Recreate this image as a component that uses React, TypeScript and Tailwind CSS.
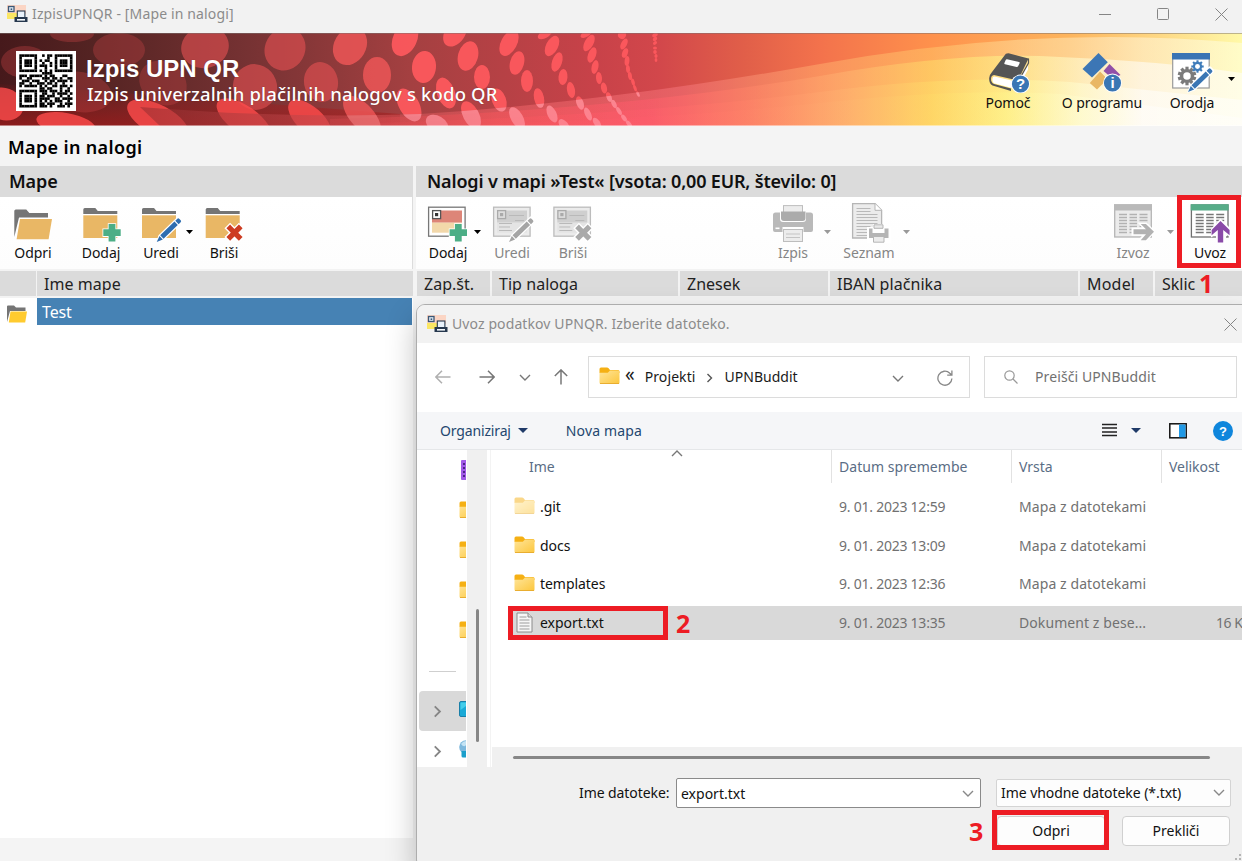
import type { ReactNode } from "react";

const QR_ROWS = [
  "111111100101101111111",
  "100000100001001000001",
  "101110101011001011101",
  "101110100100101011101",
  "101110101110101011101",
  "100000100010001000001",
  "111111101010101111111",
  "000000000111100000000",
  "111011111010110001100",
  "100110000111011010011",
  "011101110010110111101",
  "110010011101101001000",
  "101111101010011011101",
  "000000001101100010010",
  "111111101110111010110",
  "100000100110010111101",
  "101110101101110010010",
  "101110101111001101111",
  "101110101010101110010",
  "100000101101110010111",
  "111111101110100111010",
];

function QrCode() {
  return (
    <svg className="block h-[60px] w-[60px] shrink-0" viewBox="0 0 60 60">
      <rect width="60" height="60" fill="#fff" />
      {QR_ROWS.map((row, y) =>
        row.split("").map((c, x) =>
          c === "1" ? (
            <rect key={`${x}-${y}`} x={3.3 + x * 2.53} y={3.3 + y * 2.53} width="2.6" height="2.6" fill="#000" />
          ) : null,
        ),
      )}
    </svg>
  );
}

/* cx, cy, rx, ry, rotation */
const FAINT_DOTS = [
  [72, 34, 22, 8, 0],
  [25, 62, 24, 16, 0],
  [119, 50, 26, 17, 0],
  [80, 92, 32, 20, 10],
  [163, 83, 21, 25, -55],
];
const MID_DOTS = [
  [205, 47, 24, 21, -15],
  [255, 87, 22, 23, -20],
  [285, 49, 20, 22, 30],
  [321, 82, 17, 20, -10],
];
const WARM_DOTS = [
  [350, 46, 16, 20, 30],
  [377, 75, 14, 18, 0],
  [362, 116, 12, 25, -42],
];
const DOTS = [
  [405, 39, 12, 18, 25],
  [424, 67, 12, 16, 5],
  [409, 105, 10, 18, -30],
  [455, 33, 10, 15, 35],
  [468, 56, 10, 15, 15],
  [482, 77, 8, 12, 0],
  [446, 93, 9, 16, -20],
  [499, 100, 7, 12, -20],
  [471, 115, 8, 15, -28],
  [437, 124, 8, 12, -60],
  [517, 118, 6, 12, -30],
  [509, 43, 8, 14, 28],
  [517, 63, 7, 12, 15],
  [527, 81, 6, 11, 0],
  [539, 98, 5, 10, -12],
  [552, 114, 4.5, 9, -25],
  [564, 125, 4, 7, -40],
  [545, 34, 8, 4, -30],
  [552, 46, 6, 11, 27],
  [557, 62, 5, 10, 18],
  [563, 77, 4.5, 8, 5],
  [571, 90, 4, 8, -10],
  [580, 103, 3.5, 7, -20],
  [588, 114, 3, 7, -25],
  [597, 123, 3, 6, -35],
  [586, 34, 6, 3, -30],
  [589, 43, 4.5, 9, 28],
  [592, 55, 4, 8, 20],
  [595, 67, 3.4, 7, 12],
  [599, 78, 3, 6, -5],
  [604, 88, 3, 5.5, -12],
  [609, 97, 2.5, 5, -20],
  [614, 104, 2.2, 4.5, -25],
  [619, 111, 2, 4.5, -30],
  [624, 118, 2, 4, -35],
  [629, 124, 2, 4, -38],
  [622, 35, 4, 4, 30],
  [624, 44, 3, 6, 27],
  [625, 53, 2.8, 5, 20],
  [627, 61, 2.4, 5, 5],
  [628, 69, 2, 4, -5],
  [630, 76, 2, 4, -10],
  [633, 82, 1.7, 3.5, -15],
  [635, 88, 1.5, 3.5, -20],
  [638, 94, 1.4, 3, -25],
  [655, 35, 3, 2, -35],
  [655, 39, 2.4, 1.8, -35],
  [655, 43, 2.2, 1.6, -35],
  [655, 48, 2, 1.6, 0],
  [655, 52, 1.8, 2, 0],
  [656, 56, 1.6, 2, 0],
  [656, 60, 1.4, 2, 0],
];
const GLOW_DOTS = [
  [4, 104, 20, 16, 20],
  [66, 124, 30, 11, 10],
  [158, 120, 15, 34, -62],
  [244, 120, 14, 32, -55],
  [310, 120, 13, 27, -48],
];

function Dots({ list, fill, opacity }: { list: number[][]; fill: string; opacity: number }) {
  return (
    <g fill={fill} opacity={opacity}>
      {list.map(([x, y, rx, ry, r], i) => (
        <ellipse key={i} cx={x} cy={y} rx={rx} ry={ry} transform={`rotate(${r} ${x} ${y})`} />
      ))}
    </g>
  );
}

function BannerArt() {
  return (
    <svg className="absolute inset-0 h-full w-full" viewBox="0 33 1242 93" preserveAspectRatio="none">
      <defs>
        <linearGradient id="base" x1="0" x2="1242" y1="0" y2="0" gradientUnits="userSpaceOnUse">
          <stop offset="0" stopColor="#46191b" />
          <stop offset=".08" stopColor="#552423" />
          <stop offset=".2" stopColor="#763233" />
          <stop offset=".33" stopColor="#a44041" />
          <stop offset=".48" stopColor="#c84249" />
          <stop offset=".53" stopColor="#d2474b" />
          <stop offset=".6" stopColor="#e15f49" />
          <stop offset=".66" stopColor="#f3724c" />
          <stop offset=".75" stopColor="#fe914c" />
          <stop offset=".86" stopColor="#fdb45c" />
          <stop offset="1" stopColor="#fff9a8" />
        </linearGradient>
        <linearGradient id="outer" x1="0" x2="1242" y1="0" y2="0" gradientUnits="userSpaceOnUse">
          <stop offset=".1" stopColor="#8f2b2d" />
          <stop offset=".4" stopColor="#ee6267" />
          <stop offset=".55" stopColor="#f5747a" />
          <stop offset=".66" stopColor="#ffab6c" />
          <stop offset=".75" stopColor="#ffc468" />
          <stop offset=".83" stopColor="#ffe0a4" />
          <stop offset=".92" stopColor="#fff6dc" />
          <stop offset="1" stopColor="#ffffe2" />
        </linearGradient>
        <linearGradient id="sweep" x1="0" x2="1242" y1="0" y2="0" gradientUnits="userSpaceOnUse">
          <stop offset="0" stopColor="#7c1f20" />
          <stop offset=".15" stopColor="#a23335" />
          <stop offset=".4" stopColor="#f5565c" />
          <stop offset=".52" stopColor="#ff5c6c" />
          <stop offset=".6" stopColor="#ff8268" />
          <stop offset=".68" stopColor="#ffb370" />
          <stop offset=".75" stopColor="#ffdc68" />
          <stop offset=".81" stopColor="#fff68c" />
          <stop offset=".87" stopColor="#ffffd6" />
          <stop offset=".92" stopColor="#ffffff" />
        </linearGradient>
        <linearGradient id="rim" x1="0" x2="0" y1="80" y2="126" gradientUnits="userSpaceOnUse">
          <stop offset="0" stopColor="#a11c1c" stopOpacity="0" />
          <stop offset="1" stopColor="#a11c1c" stopOpacity=".75" />
        </linearGradient>
        <clipPath id="below">
          <path d="M140 107Q290 119 420 114Q600 103 820 64V126H160Z" />
        </clipPath>
      </defs>
      <rect y="33" width="1242" height="93" fill="url(#base)" />
      <path d="M0 84Q170 96 400 114V126H0Z" fill="url(#rim)" />
      <Dots list={FAINT_DOTS} fill="#c94446" opacity={0.34} />
      <Dots list={MID_DOTS} fill="#ea5254" opacity={0.58} />
      <Dots list={WARM_DOTS} fill="#f45859" opacity={0.78} />
      <Dots list={DOTS} fill="#ff595e" opacity={0.92} />
      <Dots list={GLOW_DOTS} fill="#ff4c4c" opacity={0.8} />
      <path d="M140 107Q290 119 420 114Q600 103 820 64Q1040 24 1242 43V126H160Z" fill="url(#outer)" opacity=".55" />
      <g fill="url(#sweep)">
        <path d="M330 119Q600 113 820 76Q960 51 1060 57Q1160 61 1242 73V126H330Z" opacity=".55" />
        <path d="M380 123Q640 115 820 92Q960 74 1070 82L1242 100V126H380Z" opacity=".5" />
        <path d="M440 126Q680 118 820 103Q960 88 1060 94L1242 118V126Z" opacity=".4" />
      </g>
      <g clipPath="url(#below)">
        <Dots list={DOTS} fill="#ffa9b8" opacity={0.5} />
        <Dots list={WARM_DOTS} fill="#ff9c9c" opacity={0.35} />
      </g>
      <rect y="33" width="1242" height="1" fill="#7c7270" opacity=".5" />
      <rect y="125" width="1242" height="1" fill="#fff" opacity=".45" />
    </svg>
  );
}

function AppIcon() {
  return (
    <svg className="block h-[18px] w-[21px] shrink-0" viewBox="0 0 21 18">
      <rect x="0" y="0" width="19" height="9" fill="#fbd5c4" />
      <rect x="0" y="8" width="13" height="6" fill="#fbe764" />
      <rect x="1.5" y="1.5" width="5.5" height="5" fill="#dfe8f2" stroke="#3b5876" strokeWidth="1.3" />
      <rect x="3.6" y="3.4" width="1.6" height="1.6" fill="#3b5876" />
      <rect x="10.3" y="6" width="7.6" height="7" fill="#e9f2fb" stroke="#26384e" strokeWidth="1.1" />
      <path d="M7.5 12h13v5h-13z" fill="#26384e" />
      <rect x="10" y="14" width="8" height="1.6" fill="#f4f8fc" />
    </svg>
  );
}

function Icon({ children }: { children: ReactNode }) {
  return (
    <svg className="block h-10 w-11 shrink-0" viewBox="0 0 44 40">
      {children}
    </svg>
  );
}

function Plus({ x, y }: { x: number; y: number }) {
  const d = `M${x - 3.4} ${y - 8.7}h6.8v5.3h5.3v6.8h-5.3v5.3h-6.8v-5.3h-5.3v-6.8h5.3z`;
  return <path d={d} fill="#4cae86" stroke="#fff" strokeWidth="1.6" paintOrder="stroke" />;
}

function Cross({ x, y, fill }: { x: number; y: number; fill: string }) {
  const d = `M${x - 4.4} ${y - 4.4}l8.8 8.8m0-8.800l-8.800 8.800`;
  return (
    <g fill="none">
      <path d={d} stroke="#fff" strokeWidth="8" strokeLinecap="square" />
      <path d={d} stroke={fill} strokeWidth="5.2" strokeLinecap="square" />
    </g>
  );
}

/* Pencil pointing down-left with its tip at (x, y) */
function Pencil({ x, y, fill }: { x: number; y: number; fill: string }) {
  return (
    <g transform={`translate(${x} ${y}) rotate(46)`}>
      <path d="M0 1L-3.6-6V-32.5q0-1.500 1.500-1.500h4.200q1.500 0 1.500 1.500V-6z" fill="#fff" />
      <path d="M0 0L-2.400-6.200h4.800zM-2.400-7.200h4.800V-27h-4.800zM-2.400-28.200h4.800V-31q0-1.300-1.300-1.300h-2.200q-1.300 0-1.300 1.300z" fill={fill} />
    </g>
  );
}

function FolderBase({ x }: { x: number }) {
  return (
    <g transform={`translate(${x} 0)`}>
      <path d="M0 11V6.500q0-1.500 1.500-1.500h10.500l2.500 3H34v3z" fill="#757575" />
      <rect x="0" y="12.300" width="34" height="22.700" fill="#e9b765" />
    </g>
  );
}

function OpenFolderIcon() {
  return (
    <Icon>
      <path d="M3.300 34V8q0-1.500 1.500-1.500h10.500l3 3.500H37v4.500H8z" fill="#757575" />
      <path d="M9 16h32l-3.400 20.300H5.600z" fill="#e9b765" />
    </Icon>
  );
}

function FormCard({ x, muted }: { x: number; muted?: boolean }) {
  return (
    <g transform={`translate(${x} 0)`}>
      <rect x=".6" y="4.200" width="36.500" height="29" fill={muted ? "#ebebeb" : "#fff"} stroke={muted ? "#bcbcbc" : "#777"} strokeWidth="1.300" />
      <rect x="4" y="7.500" width="30" height="12.200" fill={muted ? "#cfcfcf" : "#dd8578"} />
      <rect x="4" y="19.700" width="30" height="10" fill={muted ? "#e4e4e4" : "#f2d8aa"} />
      <rect x="4.600" y="7.600" width="8" height="8" fill={muted ? "#ddd" : "#fff"} stroke={muted ? "#aaa" : "#555"} strokeWidth="1.300" />
      <rect x="7" y="10" width="3.200" height="3.200" fill={muted ? "#aaa" : "#333"} />
      {muted && <path d="M16 12.500h15M6 20.500h13M22 17.500h9M6 24h11M6 27.500h13" stroke="#b9b9b9" fill="none" />}
    </g>
  );
}

function PrinterIcon() {
  return (
    <Icon>
      <rect x="12.500" y="2.600" width="19" height="9" fill="#ececec" stroke="#bdbdbd" />
      <path d="M2 12q0-2.500 2.500-2.500H9v6.500q0 3 3 3h20q3 0 3-3V9.500h4.500q2.500 0 2.500 2.500v15q0 2-2 2h-7.500v-5h-21v5H4q-2 0-2-2z" fill="#b9b9b9" />
      <path d="M10 8.500h24.500V15q0 3-3 3H13q-3 0-3-3z" fill="#ababab" />
      <rect x="4.500" y="24.500" width="4" height="1.600" fill="#fff" />
      <rect x="12.500" y="26.500" width="19" height="12" fill="#ececec" stroke="#bdbdbd" />
      <path d="M15 31h14M15 34.500h14" stroke="#c4c4c4" />
    </Icon>
  );
}

function ReportIcon() {
  return (
    <Icon>
      <path d="M5.600.7h22.500l6.500 6.500V35H5.600z" fill="#ececec" stroke="#b5b5b5" strokeWidth="1.300" />
      <path d="M28 .7V7.300h6.500" fill="#fff" stroke="#b5b5b5" />
      <path d="M9.500 5.500h14M9.500 8.500h14M9.500 11.500h21M9.500 14.500h21M9.500 17.500h21M9.500 20.500h21M9.500 23.500h14M9.500 26.500h12M9.500 29.500h12M9.500 32.500h12" stroke="#b9b9b9" />
      <path d="M20 24h6v-3h12v3h6v16H20z" fill="#fff" />
      <path d="M27 21.800h9v3.500h-9z" fill="#e8e8e8" stroke="#b5b5b5" />
      <path d="M22 25.500h3.500v4.500h12v-4.500H41.500v9.500H22z" fill="#b5b5b5" />
      <path d="M26.500 33.500h10.500v5.700H26.500z" fill="#ececec" stroke="#b5b5b5" />
    </Icon>
  );
}

function Sheet({ x, muted }: { x: number; muted?: boolean }) {
  const line = muted ? "#b2b2b2" : "#777";
  return (
    <g transform={`translate(${x} 0)`}>
      <rect x=".7" y="2" width="36.600" height="32" fill={muted ? "#ebebeb" : "#fff"} stroke={muted ? "#b5b5b5" : "#6f6f6f"} strokeWidth="1.300" />
      <rect x="0" y="1.200" width="38" height="6.300" fill={muted ? "#b9b9b9" : "#57ac88"} />
      <path d="M5 11.500h8M5 14.500h8M5 17.500h8M5 20.500h8M5 23.500h8M5 26.500h8M5 29.500h8M15.500 11.500h7.500M15.500 14.500h7.500M15.500 17.500h7.500M15.500 20.500h7.500M15.500 23.500h7.500M15.500 26.500h7.500M15.500 29.500h7.500M25.500 11.500h8M25.500 14.500h8M25.500 17.500h8M25.500 20.500h8M25.500 23.500h8" stroke={line} strokeWidth="1.400" />
    </g>
  );
}

function ExportIcon() {
  return (
    <Icon>
      <Sheet x={3} muted />
      <path d="M20.500 24.500H31L26.500 19.500h9.200l9 9.200-9 9.300h-9.200l4.500-5.200H20.500z" fill="#fff" />
      <path d="M22.500 26.200H35L29.700 21h5.200L43 28.700 34.900 37.300h-5.200L35 31.200H22.500z" fill="#b2b2b2" />
    </Icon>
  );
}

function ImportIcon() {
  return (
    <Icon>
      <Sheet x={2.7} />
      <path d="M28 40V31.500l-5 3V26L32.500 15.500l10.500 10.500v8.500l-5-3V40z" fill="#fff" />
      <path d="M32.500 18L41.600 27v5.200L35.200 27v12.500h-5.400V27L23.600 32.200V27z" fill="#8a4ba8" />
    </Icon>
  );
}

function Badge({ x, y, text }: { x: number; y: number; text: string }) {
  return (
    <g>
      <circle cx={x} cy={y} r="9.400" fill="#fff" />
      <circle cx={x} cy={y} r="8.600" fill="#3a76b4" />
      <text x={x} y={y + 5.3} textAnchor="middle" fill="#fff" className="font-['Liberation_Sans'] text-[15px] font-bold">
        {text}
      </text>
    </g>
  );
}

function HelpIcon() {
  return (
    <Icon>
      <path d="M22.500.3L42.500 5.500 32 27.500 8 22Q5 22.500 5 26t3 5l17 4.500v2.500L6.500 32.500Q2.800 30.500 3.200 25q.4-3.500 2.800-6L18.500 2.500Q19.500.2 22.500.3z" fill="#555" />
      <path d="M8.500 23.500L32 29 42 10.500v6L33 33l-7 2L8 30.200Q6.300 29.500 6.400 26.500T8.500 23.500z" fill="#fff" />
      <path d="M42.500 5.500v4.500L33 27v3" fill="none" stroke="#555" strokeWidth="1.200" />
      <path d="M21 6.200l12 2.700q1 .3.600 1.300l-1.500 3q-.5 1-1.500.8L19 11.300q-1-.3-.6-1.300l1.300-3q.4-.9 1.300-.8z" fill="#fff" />
      <Badge x={34.5} y={31} text="?" />
    </Icon>
  );
}

function AboutIcon() {
  return (
    <Icon>
      <path d="M18.500 0L27.800 9.200 12 24.500 2.500 16z" fill="#3c76b5" />
      <path d="M29.500 11L40.500 22 36 24l-6-.5-6.500-5.500z" fill="#9150a8" />
      <path d="M20 18.500l5 5-.5 5.500-7.500 7.500L9.800 30z" fill="#e9b765" />
      <Badge x={32.5} y={30} text="i" />
    </Icon>
  );
}

function Gear({ x, y, r, fill, n }: { x: number; y: number; r: number; fill: string; n: number }) {
  return (
    <g transform={`translate(${x} ${y})`}>
      {Array.from({ length: n }, (_, i) => (
        <rect key={i} x={-r * 0.17} y={-r} width={r * 0.34} height={r * 0.5} fill={fill} transform={`rotate(${(360 / n) * i})`} />
      ))}
      <circle r={r * 0.58} fill="none" stroke={fill} strokeWidth={r * 0.36} />
    </g>
  );
}

function ToolsIcon() {
  return (
    <Icon>
      <rect x="2.700" y="1" width="36.500" height="34" fill="#fff" stroke="#9a9a9a" strokeWidth="1.200" />
      <rect x="2" y="0" width="38" height="6.500" fill="#3a74b4" />
      <Gear x={17} y={23} r={9.3} fill="#7b7b7b" n={10} />
      <Gear x={27.5} y={13.5} r={6.2} fill="#3f7cba" n={8} />
      <Pencil x={18} y={39} fill="#3a76b4" />
    </Icon>
  );
}

function CaretDown({ className }: { className: string }) {
  return (
    <svg className={`block h-1 w-[7px] shrink-0 ${className}`} viewBox="0 0 7 4">
      <path d="M0 0h7L3.500 4z" fill="currentColor" />
    </svg>
  );
}

function ToolButton({ icon, label, width, muted, className = "" }: { icon: ReactNode; label: string; width: string; muted?: boolean; className?: string }) {
  return (
    <div className={`flex shrink-0 flex-col items-center ${width} ${className}`}>
      {icon}
      <span className={`text-[14px] leading-5 tracking-[-0.05px] whitespace-nowrap ${muted ? "text-[#858585]" : "text-[#111]"}`}>{label}</span>
    </div>
  );
}

function MenuCaret({ muted, className = "h-[59px]" }: { muted?: boolean; className?: string }) {
  return (
    <div className={`flex w-3 shrink-0 items-center justify-center ${className}`}>
      <CaretDown className={muted ? "text-[#999]" : "text-black"} />
    </div>
  );
}

function FolderIcon({ className = "" }: { className?: string }) {
  return (
    <svg className={`block h-[18px] w-[21px] shrink-0 ${className}`} viewBox="0 0 21 18">
      <defs>
        <linearGradient id="fold" x1="0" x2="1" y1="0" y2="1">
          <stop offset="0" stopColor="#ffe59a" />
          <stop offset="1" stopColor="#fcc63c" />
        </linearGradient>
      </defs>
      <path d="M.5 6V2q0-1.500 1.500-1.500h6q1 0 1.600.7L11 3H19q1.500 0 1.500 1.500V6z" fill="#f5b014" />
      <path d="M.5 5.800h8.300L11 3.600H19q1.500 0 1.500 1.500V15.500q0 1.500-1.500 1.500H2Q.5 17 .5 15.500z" fill="url(#fold)" />
      <path d="M1 16.500h19" stroke="#e7a92b" strokeWidth=".9" />
    </svg>
  );
}

function Chevron({ dir, className }: { dir: "down" | "right" | "up"; className: string }) {
  const d = { down: "M1 1l5 5 5-5", right: "M3.500 0l4 4-4 4", up: "M1 6l5-5 5 5" }[dir];
  return (
    <svg className={`block shrink-0 ${className}`} viewBox={dir === "right" ? "0 -1 12 10" : "0 0 12 7"} fill="none" stroke="currentColor" strokeWidth="1.400">
      <path d={d} />
    </svg>
  );
}

function Arrow({ rotate, className }: { rotate: string; className: string }) {
  return (
    <svg className={`block h-4 w-4 shrink-0 ${rotate} ${className}`} viewBox="0 0 16 16" fill="none" stroke="currentColor" strokeWidth="1.500">
      <path d="M15.500 8H1M7 1.800L.900 8 7 14.200" />
    </svg>
  );
}

function CloseIcon() {
  return (
    <svg className="block h-[13px] w-[13px] shrink-0" viewBox="0 0 13 13" stroke="#858585" fill="none">
      <path d="M.5.500l12 12M12.500.500l-12 12" />
    </svg>
  );
}

function TitleBar() {
  return (
    <div className="flex h-[33px] shrink-0 items-start bg-[#f2f2f2]">
      <div className="flex h-7 flex-1 items-center gap-1 pl-[7px]">
        <AppIcon />
        <span className="pb-px text-[14px] tracking-[0.14px] text-[#8b8b8b]">IzpisUPNQR - [Mape in nalogi]</span>
      </div>
      <div className="flex h-7 items-center gap-[46px] pr-[14px]">
        <svg className="block h-[13px] w-3" viewBox="0 0 12 13">
          <path d="M0 6.500h12" stroke="#858585" />
        </svg>
        <svg className="block h-3 w-3" viewBox="0 0 12 12">
          <rect x=".5" y=".5" width="11" height="11" rx="1" fill="none" stroke="#858585" />
        </svg>
        <CloseIcon />
      </div>
    </div>
  );
}

function Banner() {
  return (
    <div className="relative h-[93px] shrink-0">
      <BannerArt />
      <div className="relative flex h-full items-start">
        <div className="flex flex-1 items-start gap-[10px] pt-[18px] pl-4">
          <QrCode />
          <div className="flex flex-col whitespace-nowrap text-white [text-shadow:0_0_1px_rgba(60,0,0,0.5)]">
            <span className="pt-[4px] font-['Liberation_Sans',sans-serif] text-[24px] leading-7 font-bold">Izpis UPN QR</span>
            <span className="-mt-px pl-px text-[18.500px] leading-6 font-medium tracking-[0.16px]">Izpis univerzalnih plačilnih nalogov s kodo QR</span>
          </div>
        </div>
        <div className="flex pt-5">
          <ToolButton icon={<HelpIcon />} label="Pomoč" width="w-[60px]" />
          <ToolButton icon={<AboutIcon />} label="O programu" width="w-[100px]" className="ml-[14px]" />
          <ToolButton icon={<ToolsIcon />} label="Orodja" width="w-[60px]" className="ml-[10px]" />
          <MenuCaret className="mr-[5px] ml-[3px] h-[52px]" />
        </div>
      </div>
    </div>
  );
}

function SectionTitle({ children }: { children: ReactNode }) {
  return <div className="flex h-[31px] shrink-0 items-center bg-[#dbdbdb] text-[18px] font-semibold whitespace-nowrap text-[#101010]">{children}</div>;
}

function FoldersPanel() {
  return (
    <section className="flex w-[413px] shrink-0 flex-col">
      <SectionTitle>
        <span className="pl-[9px] tracking-[-0.1px]">Mape</span>
      </SectionTitle>
      <div className="flex h-[72px] shrink-0 border-r border-[#dcdcdc] bg-gradient-to-b from-white to-[#fdfdfd] pt-[6px]">
        <ToolButton icon={<OpenFolderIcon />} label="Odpri" width="w-[66px]" />
        <ToolButton
          icon={
            <Icon>
              <FolderBase x={4.3} />
              <Plus x={33} y={29.7} />
            </Icon>
          }
          label="Dodaj"
          width="w-[70px]"
        />
        <ToolButton
          icon={
            <Icon>
              <FolderBase x={3} />
              <Pencil x={17.7} y={39} fill="#2e6db0" />
            </Icon>
          }
          label="Uredi"
          width="w-[48px]"
          className="ml-px"
        />
        <MenuCaret className="-ml-[2px] h-[57px]" />
        <ToolButton
          icon={
            <Icon>
              <FolderBase x={3.7} />
              <Cross x={32.5} y={29.7} fill="#cd3c22" />
            </Icon>
          }
          label="Briši"
          width="w-[58px]"
        />
      </div>
      <div className="flex h-[29px] shrink-0 items-center gap-px border-y-2 border-[#f3f3f3] bg-[#f3f3f3] text-[16px] text-[#222]">
        <div className="h-full w-9 bg-[#dbdbdb]" />
        <div className="flex h-full flex-1 items-center bg-[#dbdbdb] pl-[7px] tracking-[0.05px]">Ime mape</div>
      </div>
      <div className="flex h-7 shrink-0 bg-white">
        <div className="flex w-[37px] items-center pt-[3px] pl-[7px]">
          <svg className="block h-[18px] w-5" viewBox="0 0 20 18">
            <path d="M0 17V1.500Q0 .5 1 .5h6l2 2h9.500V6H3z" fill="#757575" />
            <path d="M3.500 6.500H20l-1.800 11H1.800z" fill="#ffcb2f" />
          </svg>
        </div>
        <div className="mr-px mb-px flex flex-1 items-center bg-[#4682b4] pt-px pl-[5px] text-[16px] tracking-[-0.15px] text-white">Test</div>
      </div>
      <div className="flex-1 bg-white" />
    </section>
  );
}

function OrdersPanel() {
  return (
    <section className="flex min-w-0 flex-1 flex-col">
      <SectionTitle>
        <span className="pl-[11px] tracking-[-0.16px]">Nalogi v mapi »Test« [vsota: 0,00 EUR, število: 0]</span>
      </SectionTitle>
      <div className="flex h-[72px] shrink-0 bg-gradient-to-b from-white to-[#fdfdfd] pt-[6px]">
        <ToolButton
          icon={
            <Icon>
              <FormCard x={2} />
              <Plus x={32.3} y={29.7} />
            </Icon>
          }
          label="Dodaj"
          width="w-[64px]"
        />
        <MenuCaret className="-ml-[9px] h-[57px]" />
        <ToolButton
          icon={
            <Icon>
              <FormCard x={3} muted />
              <Pencil x={19} y={39} fill="#a5a5a5" />
            </Icon>
          }
          label="Uredi"
          width="w-[58px]"
          muted
        />
        <ToolButton
          icon={
            <Icon>
              <FormCard x={2.3} muted />
              <Cross x={32.3} y={29.7} fill="#aaa" />
            </Icon>
          }
          label="Briši"
          width="w-[64px]"
          muted
        />
        <ToolButton icon={<PrinterIcon />} label="Izpis" width="w-[60px]" muted className="ml-[158px]" />
        <MenuCaret muted className="-ml-[2px] h-[57px]" />
        <ToolButton icon={<ReportIcon />} label="Seznam" width="w-[70px]" muted className="ml-px" />
        <MenuCaret muted className="-ml-[4px] h-[57px]" />
        <ToolButton icon={<ExportIcon />} label="Izvoz" width="w-[60px]" muted className="ml-[191px]" />
        <MenuCaret muted className="ml-px h-[57px]" />
        <ToolButton icon={<ImportIcon />} label="Uvoz" width="w-[60px]" className="ml-[4px]" />
      </div>
      <div className="ml-px flex h-[29px] shrink-0 gap-[2px] border-y-2 border-[#f3f3f3] bg-[#f3f3f3] text-[16px] whitespace-nowrap text-[#222] *:flex *:items-center *:bg-[#dbdbdb] *:pl-[7px]">
        <div className="w-[73px]">Zap.št.</div>
        <div className="w-[186px] tracking-[0.05px]">Tip naloga</div>
        <div className="w-[148px]">Znesek</div>
        <div className="w-[248px] tracking-[0.05px]">IBAN plačnika</div>
        <div className="w-[73px] tracking-[0.2px]">Model</div>
        <div className="flex-1">Sklic</div>
      </div>
      <div className="flex-1 bg-[#f4f4f4]" />
    </section>
  );
}

function SideItems() {
  return (
    <div className="flex w-[49px] shrink-0 flex-col overflow-hidden *:shrink-0">
      <div className="flex h-10 items-center justify-end">
        <svg className="block h-5 w-[5px]" viewBox="0 0 5 20">
          <rect width="8" height="20" rx="1" fill="#a25be8" />
          <path d="M2 3h2v2H2zM2 7h2v2H2zM2 11h2v2H2zM2 15h2v2H2z" fill="#4d2288" />
        </svg>
      </div>
      {[0, 1, 2, 3].map((i) => (
        <div key={i} className="flex h-10 items-center justify-end">
          <div className="w-[7px] overflow-hidden">
            <FolderIcon />
          </div>
        </div>
      ))}
      <div className="flex h-[41px] items-center pl-[12px]">
        <div className="mt-[2px] h-px w-[27px] bg-[#cfcfcf]" />
      </div>
      <div className="ml-[2px] flex h-10 items-center justify-between rounded-l bg-[#d9d9d9] pl-[11px]">
        <Chevron dir="right" className="h-[13px] w-4 text-[#858585]" />
        <svg className="mb-1 block h-4 w-[7px]" viewBox="0 0 7 16">
          <path d="M7 .5H2Q.500.500.500 2v12q0 1.500 1.500 1.500h5z" fill="#1aa9d6" />
          <path d="M7 1.500H1.500V9L7 5z" fill="#43cdea" />
          <path d="M7 .5H2Q.500.500.500 2v12q0 1.500 1.500 1.500h5" fill="none" stroke="#1a7fa8" />
        </svg>
      </div>
      <div className="ml-[2px] flex h-10 items-center justify-between pl-[11px]">
        <Chevron dir="right" className="h-[13px] w-4 text-[#858585]" />
        <svg className="mb-1 block h-[18px] w-[7px]" viewBox="0 0 7 18">
          <circle cx="7" cy="7" r="6.800" fill="#7db8dd" />
          <path d="M2 4q2-3 5-3v4q-2 3-5-1z" fill="#c4e3f4" />
          <path d="M2.500 11H7v6.500H4q-1.500 0-1.500-1.500z" fill="#1a9fcb" />
        </svg>
      </div>
    </div>
  );
}

interface FileEntry {
  name: string;
  date: string;
  kind: string;
  size?: string;
  faded?: boolean;
  selected?: boolean;
}

const FILES: FileEntry[] = [
  { name: ".git", date: "9. 01. 2023 12:59", kind: "Mapa z datotekami", faded: true },
  { name: "docs", date: "9. 01. 2023 13:09", kind: "Mapa z datotekami" },
  { name: "templates", date: "9. 01. 2023 12:36", kind: "Mapa z datotekami" },
  { name: "export.txt", date: "9. 01. 2023 13:35", kind: "Dokument z bese...", size: "16 K", selected: true },
];

function TextFileIcon() {
  return (
    <svg className="mx-[2px] block h-[21px] w-[17px] shrink-0" viewBox="0 0 17 21">
      <path d="M1 1h11l4 4v15H1z" fill="#f6f6f6" stroke="#8c8c8c" />
      <path d="M12 1v4h4" fill="#ddd" stroke="#8c8c8c" />
      <path d="M3.500 5h7M3.500 8h10M3.500 11h10M3.500 14h10M3.500 17h10" stroke="#9c9c9c" />
    </svg>
  );
}

function FileRow({ file }: { file: FileEntry }) {
  return (
    <div className="flex h-[38.800px] items-center">
      <div className={`flex h-[34px] flex-1 items-center text-[14px] whitespace-nowrap text-[#717171] ${file.selected ? "bg-[#d9d9d9]" : ""}`}>
        <div className="flex w-[325px] items-center gap-[5px] pl-[6px] text-[#111]">
          {file.selected ? <TextFileIcon /> : <FolderIcon className={file.faded ? "mb-px opacity-50" : "mb-px"} />}
          <span className="tracking-[-0.05px]">{file.name}</span>
        </div>
        <div className="w-[180px] pl-[6px] tracking-[-0.24px]">{file.date}</div>
        <div className="w-[150px] pl-[6px] tracking-[0.08px]">{file.kind}</div>
        <div className="pl-[53px] tracking-[-0.5px]">{file.size}</div>
      </div>
    </div>
  );
}

function FileList() {
  return (
    <div className="flex min-w-0 flex-1 flex-col overflow-hidden">
      <div className="relative flex h-[33px] shrink-0 text-[14px] whitespace-nowrap text-[#5a6d85]">
        <div className="flex w-[340px] items-center border-r border-[#e2e2e2] pl-[37px]">Ime</div>
        <div className="flex w-[180px] items-center border-r border-[#e2e2e2] pl-[7px] tracking-[0.05px]">Datum spremembe</div>
        <div className="flex w-[150px] items-center border-r border-[#e2e2e2] pl-[7px]">Vrsta</div>
        <div className="flex items-center pl-[7px] tracking-[-0.05px]">Velikost</div>
        <Chevron dir="up" className="absolute top-0 left-[179px] h-[7px] w-3 text-[#777]" />
      </div>
      <div className="flex flex-1 flex-col pt-1 pl-4">
        {FILES.map((f) => (
          <FileRow key={f.name} file={f} />
        ))}
      </div>
      <div className="flex h-5 shrink-0 items-center bg-[#f0f0f0] pl-[21px]">
        <div className="h-[3px] w-[697px] rounded-full bg-[#868686]" />
      </div>
    </div>
  );
}

function OpenDialog() {
  return (
    <div className="absolute top-[304px] left-[416px] flex h-[565px] w-[840px] flex-col overflow-hidden rounded-[9px] border border-[#adadad] bg-[#f0f0f0] shadow-[0_14px_30px_rgba(0,0,0,0.25)]">
      <div className="flex h-[38px] shrink-0 items-center bg-[#f2f2f2] pr-[18px] pl-[10px]">
        <AppIcon />
        <span className="flex-1 pb-[2px] pl-1 text-[14px] tracking-[0.1px] text-[#8b8b8b]">Uvoz podatkov UPNQR. Izberite datoteko.</span>
        <CloseIcon />
      </div>
      <div className="flex h-[69px] shrink-0 items-center bg-white pb-px pl-[18px] text-[14px]">
        <Arrow rotate="" className="text-[#b0b0b0]" />
        <Arrow rotate="rotate-180" className="ml-7 text-[#777]" />
        <Chevron dir="down" className="ml-[24px] h-[7px] w-3 text-[#777]" />
        <Arrow rotate="rotate-90" className="ml-[22px] text-[#777]" />
        <div className="ml-[19px] flex h-[42px] w-[382px] items-center border border-[#dcdcdc] pl-[10px] text-[#1a1a1a]">
          <FolderIcon className="mb-[3px]" />
          <span className="ml-[5px] pb-[5px] text-[19px] leading-none">«</span>
          <span className="ml-[10px] pb-[2px] tracking-[0.1px]">Projekti</span>
          <Chevron dir="right" className="mt-px ml-2 h-[10px] w-3 text-[#555]" />
          <span className="ml-[9px] flex-1 pb-[2px]">UPNBuddit</span>
          <Chevron dir="down" className="mt-[2px] mr-[33px] h-[7px] w-3 text-[#777]" />
          <svg className="mt-[2px] mr-4 block h-4 w-4" viewBox="0 0 16 16" fill="none" stroke="#888" strokeWidth="1.300">
            <path d="M14.900 8.500A7 7 0 1 1 12.800 3.200L14.800 5M14.900.500V5.200H10.200" />
          </svg>
        </div>
        <div className="ml-[14px] flex h-[42px] w-[253px] items-center border border-[#dcdcdc] pl-[19px] text-[#717171]">
          <svg className="block h-[14px] w-[14px]" viewBox="0 0 14 14" fill="none" stroke="#999" strokeWidth="1.200">
            <circle cx="5.500" cy="5.500" r="4.700" />
            <path d="M9 9l4.500 4.500" />
          </svg>
          <span className="ml-[17px] pb-[2px] tracking-[0.1px]">Preišči UPNBuddit</span>
        </div>
      </div>
      <div className="flex h-[38px] shrink-0 items-center border-b border-[#e5e7e9] bg-[#f5f6f8] pb-px pl-[23px] text-[14px] text-[#24476f]">
        <span className="tracking-[-0.15px]">Organiziraj</span>
        <svg className="ml-[7px] block h-[5px] w-[10px]" viewBox="0 0 10 5">
          <path d="M0 0h10L5 5z" fill="#1f3a68" />
        </svg>
        <span className="ml-[38px] w-[536px] tracking-[0.15px]">Nova mapa</span>
        <svg className="block h-[14px] w-[15px]" viewBox="0 0 15 14" stroke="#222" strokeWidth="1.300">
          <path d="M0 1.500h15M0 5h15M0 9h15M0 12.500h15" />
        </svg>
        <svg className="ml-[14px] block h-[5px] w-[10px]" viewBox="0 0 10 5">
          <path d="M0 0h10L5 5z" fill="#1f3a68" />
        </svg>
        <svg className="mt-px ml-7 block h-4 w-[18px]" viewBox="0 0 18 16">
          <rect x=".8" y=".8" width="16.400" height="14" fill="#fff" stroke="#111" strokeWidth="1.500" />
          <rect x="10" y="1.500" width="6.500" height="12.700" fill="#2099e6" />
        </svg>
        <svg className="mt-px ml-[26px] block h-5 w-5" viewBox="0 0 20 20">
          <circle cx="10" cy="10" r="10" fill="#0f86dc" />
          <text x="10" y="14.500" textAnchor="middle" fill="#fff" className="font-['Liberation_Sans'] text-[13px] font-bold">
            ?
          </text>
        </svg>
      </div>
      <div className="flex h-[317px] shrink-0 bg-white">
        <SideItems />
        <div className="ml-px flex w-5 shrink-0 justify-center bg-[#f0f0f0] pt-[159px]">
          <div className="h-[133px] w-[3px] rounded-full bg-[#868686]" />
        </div>
        <div className="mr-px ml-[3px] w-px bg-[#f3f3f3]" />
        <FileList />
      </div>
      <div className="flex flex-col gap-2 pt-[11px] text-[14px] text-[#111]">
        <div className="flex items-center pl-[162px]">
          <span className="mb-px w-[93px] tracking-[-0.08px] whitespace-nowrap">Ime datoteke:</span>
          <div className="ml-1 flex h-[30px] w-[305px] items-center justify-between rounded-[2px] border border-[#8a8a8a] bg-white pr-[6px] pl-1">
            <span className="pt-px">export.txt</span>
            <Chevron dir="down" className="h-[7px] w-3 text-[#888]" />
          </div>
          <div className="mb-px ml-[15px] flex h-[28px] w-[235px] items-center justify-between rounded-[2px] border border-[#d4d4d4] bg-[#fdfdfd] pr-[5px] pl-1">
            <span className="tracking-[-0.06px] whitespace-nowrap">Ime vhodne datoteke (*.txt)</span>
            <Chevron dir="down" className="h-[7px] w-3 text-[#888]" />
          </div>
        </div>
        <div className="flex gap-[17px] pl-[580px] *:flex *:h-[30px] *:w-[108px] *:items-center *:justify-center *:rounded *:border *:border-[#d0d0d0] *:bg-[#fdfdfd] *:pb-[2px]">
          <button>Odpri</button>
          <button>Prekliči</button>
        </div>
      </div>
      <svg className="absolute right-[14px] bottom-2 h-[6px] w-[6px]" viewBox="0 0 6 6" fill="#b5b5b5">
        <path d="M0 4h2v2H0zM4 4h2v2H4zM4 0h2v2H4z" />
      </svg>
    </div>
  );
}

function Callouts() {
  return (
    <div className="text-[25px] leading-[26px] font-bold text-[#ed1c24]">
      <div className="absolute top-[195px] left-[1177px] h-[73px] w-16 border-[5px] border-[#ed1c24]" />
      <span className="absolute top-[270px] left-[1199px]">1</span>
      <div className="absolute top-[606px] left-[508px] h-[34px] w-40 border-[5px] border-[#ed1c24]" />
      <span className="absolute top-[610px] left-[676px]">2</span>
      <div className="absolute top-[810px] left-[992px] h-10 w-[117px] border-[5px] border-[#ed1c24]" />
      <span className="absolute top-[818px] left-[969px]">3</span>
    </div>
  );
}

export default function App() {
  return (
    <div className="relative flex h-[861px] w-[1242px] flex-col overflow-hidden bg-[#f4f4f4] font-['Noto_Sans',sans-serif]">
      <TitleBar />
      <Banner />
      <div className="flex h-10 shrink-0 items-center pt-[3px] pl-[8px] text-[18px] font-semibold tracking-[0.35px]">Mape in nalogi</div>
      <div className="flex h-[672px] shrink-0 gap-[3px]">
        <FoldersPanel />
        <OrdersPanel />
      </div>
      <OpenDialog />
      <Callouts />
    </div>
  );
}
